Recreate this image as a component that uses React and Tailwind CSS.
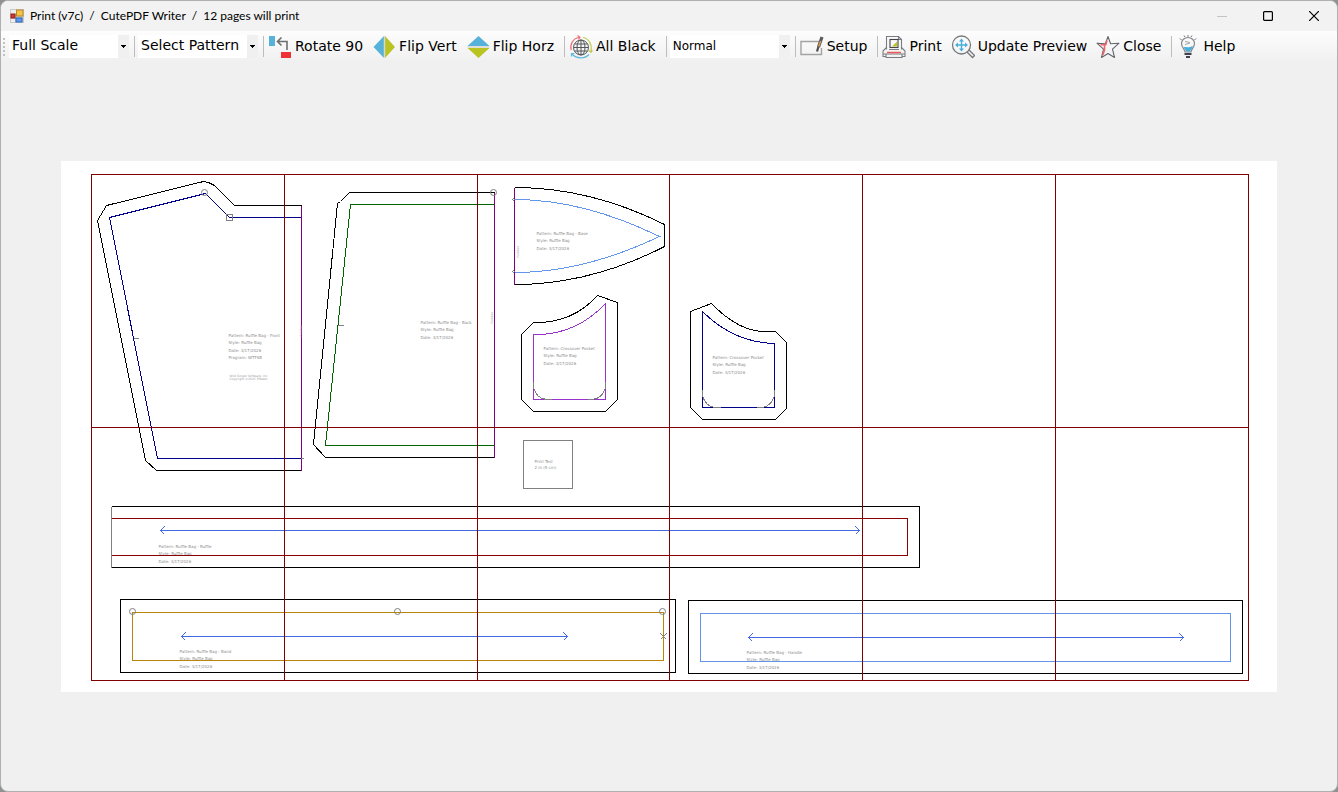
import React, { useState } from 'react';

const INK = '#000000';
const GRAY = '#808080';
const MAROON = '#800000';
const FOLD = '#800080';

const Combo = ({ label, options, textClass = 'text-[14px]' }) => {
  const [value, setValue] = useState(options[0]);

  return (
    <div className="relative ml-[3px] h-[23px] w-[120px] shrink-0 bg-white">
      <select
        aria-label={label}
        value={value}
        onChange={(e) => setValue(e.target.value)}
        className={`block h-[21px] w-full appearance-none bg-transparent pr-3 pl-[3px] text-black outline-none ${textClass}`}
      >
        {options.map((option) => (
          <option key={option}>{option}</option>
        ))}
      </select>
      <span className="pointer-events-none absolute inset-y-0 right-0 flex w-[11px] items-center justify-center bg-[#f0f0f0]">
        <svg width="5" height="3" viewBox="0 0 5 3" shapeRendering="crispEdges">
          <path d="M0 0h5v1h-1v1h-1v1h-1v-1h-1v-1h-1z" fill="#000" />
        </svg>
      </span>
    </div>
  );
};

const Separator = () => <span className="ml-[5px] h-[21px] w-px shrink-0 bg-[#bdbdbd]" />;

const ToolButton = ({ icon, children }) => (
  <button
    type="button"
    className="flex h-[25px] shrink-0 items-center gap-[3px] pr-[5px] pl-1 text-[14px] whitespace-nowrap text-black hover:bg-[#d8e6f5]"
  >
    <svg width="24" height="24" viewBox="0 0 24 24" fill="none">
      {icon}
    </svg>
    {children}
  </button>
);

const icons = {
  rotate: (
    <>
      <rect x="1" y="1" width="6" height="10" fill="#56b2d9" />
      <rect x="13" y="17" width="10" height="6" fill="#ee3135" />
      <path d="M19 15V6.500H10M13.500 2.500L9.500 6.500l4 4" stroke="#6d6e70" strokeWidth="1.600" />
    </>
  ),
  flipVert: (
    <>
      <path d="M12 1v22L1.500 12z" fill="#56b2d9" />
      <path d="M13 1v22l10-11z" fill="#b9c423" />
      <path d="M12.500 1v22" stroke="#d8d8cf" strokeWidth="1.500" />
    </>
  ),
  flipHorz: (
    <>
      <path d="M1.500 11h22L12.500 1z" fill="#56b2d9" />
      <path d="M1.500 13h22L12.500 23z" fill="#b9c423" />
      <path d="M1.500 12h22" stroke="#d8d8cf" strokeWidth="1.500" />
    </>
  ),
  globe: (
    <>
      <g stroke="#55565a" strokeWidth="1">
        <circle cx="12" cy="12.500" r="7.500" />
        <ellipse cx="12" cy="12.500" rx="4" ry="7.500" />
        <path d="M12 5v15M4.500 12.500h15M5.500 9h13M5.500 16h13" />
      </g>
      <path d="M2.200 15C.8 9 4 3.500 10 2.500M8.500.5l2.500 1.800L9.500 4.500" stroke="#ee6b78" strokeWidth="1.200" />
      <path d="M14 2.500c6 1 9.300 7 8 14M20 15.500l2 1.800 1.500-2" stroke="#c2cb4a" strokeWidth="1.200" />
      <path d="M20 19.500c-4 4.500-12.500 4.500-17-.5M2.500 21.500V18.500h3" stroke="#64b8dc" strokeWidth="1.200" />
    </>
  ),
  setup: (
    <>
      <path d="M19 6.500H1v13h20.500V13" stroke="#a2a2a2" strokeWidth="1.400" />
      <path d="M18.500 12l3.500-10" stroke="#5c5c5c" strokeWidth="3.200" />
      <path d="M18.500 12l2.200-6" stroke="#d99a4c" strokeWidth="1.500" />
      <path d="M18.500 11.500L17 16.500" stroke="#4b4b4b" strokeWidth="2.200" />
    </>
  ),
  print: (
    <>
      <g stroke="#7b7c82" strokeWidth="1.100">
        <path d="M4.500 14.500V1.500h12l3 3v10M16.500 1.500v3h3" />
        <path d="M4.500 12.500L1 16v3h22v-3l-3.500-3.500M1 19v2.500h3M23 19v2.500h-3M4 19.500v3h16v-3" />
        <rect x="8" y="4.500" width="8" height="8" stroke="#44454b" />
        <path d="M7 14.500h10" />
      </g>
      <path d="M10 11.500l5-5v5z" fill="#b9c423" />
      <path d="M5 17.500h14" stroke="#f0575d" strokeWidth="1.500" />
    </>
  ),
  preview: (
    <>
      <circle cx="10.500" cy="10" r="9" stroke="#77787c" strokeWidth="1.300" />
      <path d="M16 17l5.500 5.500 2-2L18 15" stroke="#77787c" strokeWidth="1.300" />
      <path d="M10.500 6v8M6.500 10h8" stroke="#49aedb" strokeWidth="1.400" />
      <path d="M10.500 3.500l2.500 3H8zM10.500 16.500l2.500-3H8zM4 10l3-2.500v5zM17 10l-3-2.500v5z" fill="#49aedb" />
    </>
  ),
  close: (
    <>
      <path
        d="M12 1.500l2.600 7.300 8.400-.6-6.500 6 2 8.300L12 18.500 5.500 22.500l2-8.300L1 8.200l8.400.6z"
        stroke="#63666d"
        strokeWidth="1.100"
        strokeLinejoin="round"
      />
      <path d="M11 5.500L9.800 9.800H4.500M8.500 10.500V15l-1.700 5" stroke="#f2636b" strokeWidth="1.600" />
    </>
  ),
  help: (
    <>
      <path d="M9 17c0-3-3.500-4-3.500-8.500a6.500 6 0 0 1 13 0c0 4.500-3.500 5.500-3.500 8.500z" stroke="#85878d" strokeWidth="1.200" />
      <path d="M7.500 12.500c3-1.500 4 .5 6.500-.5l3-1c-.5 3-2.500 3.500-3 5.500h-4c-.3-2-1.500-2.500-2.500-4z" fill="#49aedb" />
      <path d="M9 6.500l5 1M9 9.500l5-1.500" stroke="#a5a6aa" />
      <path d="M8.500 18h7v2h-7zM10 21h4v2h-4z" fill="#3f4350" />
      <path d="M12 0v1.800M8 .5l1 1.500M16 .5L15 2M4 3.500L5.500 5M20 3.500L18.500 5" stroke="#6f7178" />
    </>
  ),
};

const TitleBar = () => (
  <header className="flex h-[30px] items-center bg-[#f2f2f2] pl-[9px]">
    <svg width="14" height="14" viewBox="0 0 14 14" className="shrink-0">
      <rect x="0" y="0" width="14" height="14" fill="#c9c9c9" />
      <rect x="1" y="1" width="5" height="4" fill="#eeeeee" />
      <rect x="6.500" y="1" width="6.500" height="6" fill="#f5c542" stroke="#b9882a" />
      <rect x="1" y="5" width="4" height="4" fill="#cf3a2c" stroke="#8e2018" />
      <rect x="6" y="9" width="6" height="4" fill="#5c9bf0" stroke="#3163b8" />
      <rect x="1" y="10" width="4" height="3" fill="#eeeeee" />
    </svg>
    <h1 className="ml-[6px] flex-1 font-[Lato,'Open_Sans',sans-serif] text-[12px] whitespace-pre text-black">
      {'Print (v7c)  /  CutePDF Writer  /  12 pages will print'}
    </h1>
    <div className="flex h-full">
      <button type="button" aria-label="Minimize" disabled className="flex w-[46px] items-center justify-center">
        <svg width="10" height="10" viewBox="0 0 10 10" stroke="#c4c4c4">
          <path d="M0 5.500h10" />
        </svg>
      </button>
      <button type="button" aria-label="Maximize" className="flex w-[46px] items-center justify-center">
        <svg width="10" height="10" viewBox="0 0 10 10" fill="none" stroke="#000" strokeWidth="1.200">
          <rect x=".6" y=".6" width="8.800" height="8.800" rx="1" />
        </svg>
      </button>
      <button type="button" aria-label="Close window" className="flex w-[46px] items-center justify-center">
        <svg width="10" height="10" viewBox="0 0 10 10" stroke="#000" strokeWidth="1.200">
          <path d="M0 0l10 10M10 0L0 10" />
        </svg>
      </button>
    </div>
  </header>
);

const Toolbar = () => (
  <nav className="flex h-[31px] items-center bg-linear-to-b from-[#fdfdfd] to-[#f0f0f0] pl-[2px]">
    <svg width="3" height="18" viewBox="0 0 3 18" className="shrink-0" fill="#c2c2c2" shapeRendering="crispEdges">
      <path d="M0 0h2v2H0zM0 4h2v2H0zM0 8h2v2H0zM0 12h2v2H0zM0 16h2v2H0z" />
    </svg>
    <Combo label="Scale" options={['Full Scale', 'Half Scale', 'Quarter Scale']} />
    <Separator />
    <Combo label="Pattern" options={['Select Pattern', 'Front', 'Back', 'Base']} />
    <Separator />
    <ToolButton icon={icons.rotate}>Rotate 90</ToolButton>
    <ToolButton icon={icons.flipVert}>Flip Vert</ToolButton>
    <ToolButton icon={icons.flipHorz}>Flip Horz</ToolButton>
    <Separator />
    <ToolButton icon={icons.globe}>All Black</ToolButton>
    <Separator />
    <Combo label="Line weight" options={['Normal', 'Thick', 'Thin']} textClass="text-[12px]" />
    <Separator />
    <ToolButton icon={icons.setup}>Setup</ToolButton>
    <Separator />
    <ToolButton icon={icons.print}>Print</ToolButton>
    <ToolButton icon={icons.preview}>Update Preview</ToolButton>
    <ToolButton icon={icons.close}>Close</ToolButton>
    <Separator />
    <ToolButton icon={icons.help}>Help</ToolButton>
  </nav>
);

// Name, style and date printed inside a pattern piece
const PieceNotes = ({ x, y, name, extra }) => (
  <g fill="#8c8c8c" stroke="none" fontSize="4">
    <text x={x} y={y}>{`Pattern: ${name}`}</text>
    <text x={x} y={y + 7}>Style: Ruffle Bag</text>
    <text x={x} y={y + 15}>Date: 3/17/2026</text>
    {extra && <text x={x} y={y + 22}>{extra}</text>}
  </g>
);

const FoldLabel = ({ x, y }) => (
  <text transform={`translate(${x} ${y}) rotate(-90)`} fill="#a0a0a0" stroke="none" fontSize="3">
    Foldline
  </text>
);

const Grainline = ({ x1, x2, y }) => (
  <path
    d={`M${x1} ${y}H${x2}M${x1 + 4} ${y - 4}l-4 4l4 4M${x2 - 4} ${y - 4}l4 4l-4 4`}
    stroke="#4169e1"
  />
);

const PatternSheet = () => (
  <svg
    viewBox="61 161 1216 531"
    className="block w-full bg-white"
    fill="none"
    role="img"
    aria-label="Page layout preview"
    fontFamily="'DejaVu Sans', sans-serif"
  >
    <g transform="translate(.5 .5)" shapeRendering="crispEdges">
      {/* Front */}
      <path d="M301 205H234L214 185L208 182L203 181L106 205L97 220L145 460L156 470H301" stroke={INK} />
      <path d="M301 217H229L205 193L109 217L157 458H301" stroke="#00008b" />
      <path d="M301 205V470" stroke={FOLD} />
      <path d="M133 338h5M300 458h3M226 214h6v6h-6z" stroke={GRAY} />
      <PieceNotes x={228} y={336} name="Ruffle Bag - Front" extra="Program: WTFSB" />
      <g fill="#a0a0a0" stroke="none" fontSize="3">
        <text x="229" y="376">Wild Ginger Software, Inc.</text>
        <text x="229" y="379">Copyright ©2025 PMaker</text>
      </g>
      <FoldLabel x={301} y={336} />

      {/* Back */}
      <path d="M494 192H349L340 201L337 203L313 444L325 457H494" stroke={INK} />
      <path d="M494 204H350L325 445H494" stroke="#006400" />
      <path d="M494 192V457" stroke={FOLD} />
      <path d="M337 325h6" stroke={GRAY} />
      <PieceNotes x={420} y={323} name="Ruffle Bag - Back" />
      <FoldLabel x={492} y={323} />

      {/* Base */}
      <path d="M514 187Q590 187 664 224V246Q590 284 514 284" stroke={INK} />
      <path d="M514 199Q583 199 659 236Q583 272 514 272" stroke="#6495ed" />
      <path d="M514 187V284" stroke={FOLD} />
      <path d="M512 199l1 -1l1 1l-1 1zM512 271l1 -1l1 1l-1 1z" stroke={GRAY} />
      <PieceNotes x={536} y={234} name="Ruffle Bag - Base" />
      <FoldLabel x={518} y={257} />

      {/* Crossover pockets */}
      <path d="M533 322Q572 323 597 295L617 302V399L605 411H533L521 399V334Z" stroke={INK} />
      <path d="M533 334Q575 335 605 303V399H533Z" stroke="#9932cc" />
      <path d="M533 381V387Q536 398 546 399H551M605 381V387Q602 398 592 399H587" stroke={GRAY} />
      <PieceNotes x={543} y={349} name="Crossover Pocket" />

      <path d="M690 311L711 303Q738 331 764 331H775L786 342V408L775 419H702L690 407Z" stroke={INK} />
      <path d="M702 311Q733 342 774 343V407H702Z" stroke="#00008b" />
      <path d="M702 389V395Q705 406 714 407H720M774 389V395Q771 406 761 407H756" stroke={GRAY} />
      <PieceNotes x={712} y={358} name="Crossover Pocket" />

      {/* Test square */}
      <path d="M523 440H572V488H523Z" stroke={GRAY} />
      <g fill="#8c8c8c" stroke="none" fontSize="4">
        <text x="534" y="462">Print Test</text>
        <text x="534" y="468">2 in (5 cm)</text>
      </g>

      {/* Ruffle */}
      <path d="M111 506H919V567H111" stroke={INK} />
      <PieceNotes x={158} y={547} name="Ruffle Bag - Ruffle" />
      <path d="M111 518H907V555H111" stroke="#8b0000" />
      <path d="M111 506V567" stroke={GRAY} />
      <Grainline x1={160} x2={859} y={530} />

      {/* Band */}
      <PieceNotes x={179} y={652} name="Ruffle Bag - Band" />
      <path d="M120 599H675V672H120Z" stroke={INK} />
      <path d="M132 612H663V660H132Z" stroke="#b8860b" />
      <Grainline x1={181} x2={567} y={636} />
      <path d="M660 633l6 6M666 633l-6 6" stroke={GRAY} />

      {/* Handle */}
      <PieceNotes x={746} y={653} name="Ruffle Bag - Handle" />
      <path d="M688 600H1242V673H688Z" stroke={INK} />
      <path d="M700 613H1230V661H700Z" stroke="#6495ed" />
      <Grainline x1={748} x2={1183} y={637} />

      {/* Page grid */}
      <path
        d="M91 174H1248V680H91ZM91 427H1248M284 174V680M477 174V680M669 174V680M862 174V680M1055 174V680"
        stroke={MAROON}
      />
    </g>

    {/* Notch circles */}
    <g transform="translate(.5 .5)" stroke={GRAY}>
      <circle cx="204" cy="192" r="3" />
      <circle cx="493" cy="192" r="3" />
      <circle cx="132" cy="611" r="3" />
      <circle cx="397" cy="611" r="3" />
      <circle cx="662" cy="611" r="3" />
    </g>
  </svg>
);

const App = () => (
  <div className="bg-[#8f9295]">
    <div className="flex min-h-screen flex-col overflow-hidden rounded-lg border border-[#b0b0b0] bg-[#f0f0f0] font-['DejaVu_Sans',sans-serif]">
      <TitleBar />
      <Toolbar />
      <main className="flex flex-1 items-center px-[60px]">
        <PatternSheet />
      </main>
    </div>
  </div>
);

export default App;
